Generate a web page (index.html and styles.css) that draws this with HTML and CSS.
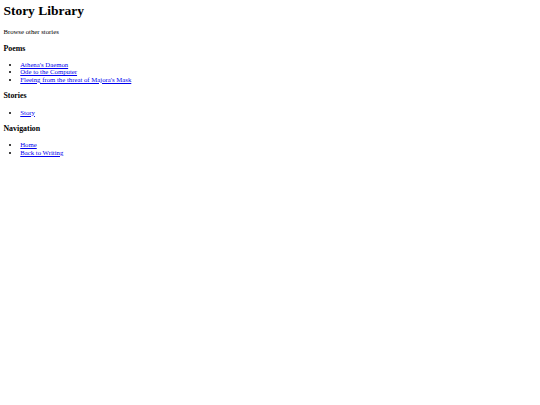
FILE: index.html
```html
<!DOCTYPE html>
<html>
<head>
<meta charset="utf-8">
<title>Story Library</title>
<link rel="stylesheet" href="styles.css">
</head>
<body class="page">
<h1 class="title">Story Library</h1>
<p class="intro">Browse other stories</p>
<h3 class="section">Poems</h3>
<ul class="list">
<li><a href="#">Athena's Daemon</a></li>
<li><a href="#">Ode to the Computer</a></li>
<li><a href="#">Fleeing from the threat of Majora's Mask</a></li>
</ul>
<h3 class="section">Stories</h3>
<ul class="list">
<li><a href="#">Story</a></li>
</ul>
<h3 class="section">Navigation</h3>
<ul class="list">
<li><a href="#">Home</a></li>
<li><a href="#">Back to Writing</a></li>
</ul>
</body>
</html>
```
FILE: styles.css
```css
html {
  background: #fff;
}
.page {
  margin: 3.375px;
  font-family: "Liberation Serif", "Times New Roman", serif;
  font-size: 6.75px;
  line-height: 7.59px;
  color: #000;
}
.title {
  font-size: 13.5px;
  line-height: 15.61px;
  margin: 0 0 9.045px;
}
.intro {
  margin: 6.75px 0;
}
.section {
  font-size: 7.9px;
  line-height: 9.28px;
  margin: 7.9px 0;
}
.list {
  margin: 6.75px 0;
  padding-left: 16.875px;
}
.list a {
  color: #0000ee;
}
```
